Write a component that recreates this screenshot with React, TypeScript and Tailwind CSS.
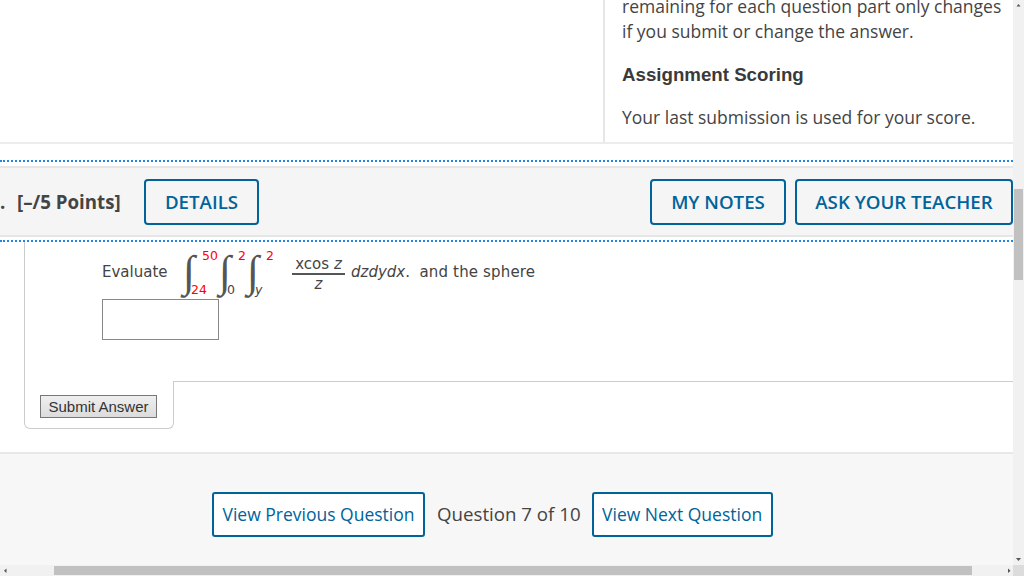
const openSans = "font-['Open_Sans',sans-serif]";

function OutlineButton({ label, className }: { label: string; className: string }) {
  return (
    <button
      type="button"
      className={`h-[46px] rounded-[4px] border-2 border-[#00639a] bg-[#f5f5f5] pt-[1px] font-['Open_Sans',sans-serif] text-[18.7px] font-semibold text-[#00639a] ${className}`}
    >
      {label}
    </button>
  );
}

function FooterButton({ label, className }: { label: string; className: string }) {
  return (
    <button
      type="button"
      className={`h-[45px] rounded-[3px] border-2 border-[#00639a] bg-white font-['Open_Sans',sans-serif] text-[17.5px] text-[#00639a] ${className}`}
    >
      {label}
    </button>
  );
}

function Integral({ upper, lower, lowerClass, width }: { upper: string; lower: string; lowerClass: string; width: string }) {
  return (
    <span className={`relative mt-[-1px] block h-[48px] ${width}`}>
      <span className="absolute left-[0px] top-[-9px] font-['Liberation_Serif',serif] text-[44px] leading-[64px] text-[#555]">∫</span>
      <span className="absolute left-[19px] top-[-1px] text-[12.5px] leading-[16px] text-[#f00]">{upper}</span>
      <span className={`absolute left-[8px] top-[33px] text-[12.5px] leading-[16px] ${lowerClass}`}>{lower}</span>
    </span>
  );
}

function DottedLine() {
  return <div className="h-[2px] border-t-2 border-dotted border-[#1e88e5]" />;
}

export default function App() {
  return (
    <div className="flex h-[576px] w-[1024px] flex-col overflow-hidden bg-white text-[#444]">
      <div className="flex min-h-0 flex-1">
        <div className="flex w-[1013px] flex-col">
          {/* top of the page, scrolled */}
          <div className="flex h-[144px] border-b-2 border-[#ececec]">
            <div className="w-[605px] border-r-2 border-[#e6e6e6]" />
            <div className={`flex-1 overflow-hidden pl-[17px] text-[17.5px] text-[#444] ${openSans}`}>
              <p className="mt-[-6px] w-[385px] leading-[25px]">remaining for each question part only changes if you submit or change the answer.</p>
              <h4 className="mt-[18px] font-['Liberation_Sans',sans-serif] text-[18.7px] leading-[25px] font-bold text-[#3a3a3a]">Assignment Scoring</h4>
              <p className="mt-[18px] leading-[25px]">Your last submission is used for your score.</p>
            </div>
          </div>

          <div className="mt-[16px]"><DottedLine /></div>

          <div className="mt-[4px] flex h-[71px] items-center border-y-2 border-[#e6e6e6] bg-[#f5f5f5]">
            <span className={`w-[17px] pt-[1px] text-[18.7px] font-bold text-[#444] ${openSans}`}>.</span>
            <span className={`w-[127px] pt-[1px] text-[18.7px] font-bold text-[#444] ${openSans}`}>[–/5 Points]</span>
            <OutlineButton label="DETAILS" className="w-[115px]" />
            <OutlineButton label="MY NOTES" className="ml-auto w-[136px]" />
            <OutlineButton label="ASK YOUR TEACHER" className="ml-[9px] w-[218px]" />
          </div>

          <div className="mt-[3px]"><DottedLine /></div>

          {/* question card */}
          <div className="ml-[24px] h-[139px] border-l border-[#ccc] pl-[77px] font-['DejaVu_Sans',sans-serif] text-[15px] text-[#444]">
            <div className="flex h-[57px] items-start pt-[8px]">
              <span className="mt-[13px] w-[81px] leading-[18px]">Evaluate</span>
              <Integral upper="50" lower="24" lowerClass="text-[#f00]" width="w-[36px]" />
              <Integral upper="2" lower="0" lowerClass="text-[#444]" width="w-[28px]" />
              <Integral upper="2" lower="y" lowerClass="italic text-[#444]" width="w-[28px]" />
              <span className="mt-[5px] ml-[17px] flex w-[53px] flex-col items-center leading-[18px]">
                <span className="w-full border-b-2 border-[#555] text-center">xcos <i>z</i></span>
                <i>z</i>
              </span>
              <span className="mt-[13px] ml-[6px] leading-[18px] whitespace-pre"><i>dzdydx</i>.  <span className="tracking-[0.15px]">and the sphere</span></span>
            </div>
            <input type="text" className="block h-[41px] w-[117px] border border-[#888] bg-white" />
          </div>

          <div className="ml-[24px] flex h-[48px]">
            <div className="w-[150px] rounded-b-[6px] border-x border-b border-[#ccc] pt-[14px] pl-[15px]">
              <button
                type="button"
                className="block h-[23px] w-[117px] border border-[#777] bg-gradient-to-b from-[#efefef] to-[#dcdcdc] font-['Liberation_Sans',sans-serif] text-[15px] leading-[20px] text-[#333]"
              >
                Submit Answer
              </button>
            </div>
            <div className="flex-1 border-t border-[#ccc]" />
          </div>

          <div className="mt-[23px] flex flex-1 items-start border-t-2 border-[#e8e8e8] bg-[#f7f7f7] pt-[38px] pl-[212px]">
            <FooterButton label="View Previous Question" className="w-[213px]" />
            <span className={`ml-[12px] h-[45px] text-[18.7px] leading-[44px] text-[#444] ${openSans}`}>Question 7 of 10</span>
            <FooterButton label="View Next Question" className="ml-[11px] w-[181px]" />
          </div>
        </div>

        {/* vertical scrollbar */}
        <div className="flex w-[11px] flex-col items-center bg-[#f1f1f1]">
          <svg width="11" height="11" viewBox="0 0 11 11" className="shrink-0"><path d="M3.5 6.5 L5.5 4 L7.5 6.5 Z" fill="#555" /></svg>
          <div className="mt-[178px] h-[91px] w-[9px] bg-[#c1c1c1]" />
          <svg width="11" height="11" viewBox="0 0 11 11" className="mt-auto shrink-0"><path d="M3 4 L8 4 L5.5 7 Z" fill="#555" /></svg>
        </div>
      </div>

      {/* horizontal scrollbar */}
      <div className="flex h-[11px] shrink-0 items-center bg-[#f1f1f1]">
        <svg width="11" height="11" viewBox="0 0 11 11" className="shrink-0"><path d="M6.5 3.5 L6.5 8 L4 5.7 Z" fill="#555" /></svg>
        <div className="ml-[43px] h-[9px] w-[918px] bg-[#c1c1c1]" />
        <svg width="11" height="11" viewBox="0 0 11 11" className="ml-[30px] shrink-0"><path d="M6 3.5 L6 8 L8.5 5.7 Z" fill="#555" /></svg>
        <div className="ml-auto h-[11px] w-[11px] bg-[#dcdcdc]" />
      </div>
    </div>
  );
}
